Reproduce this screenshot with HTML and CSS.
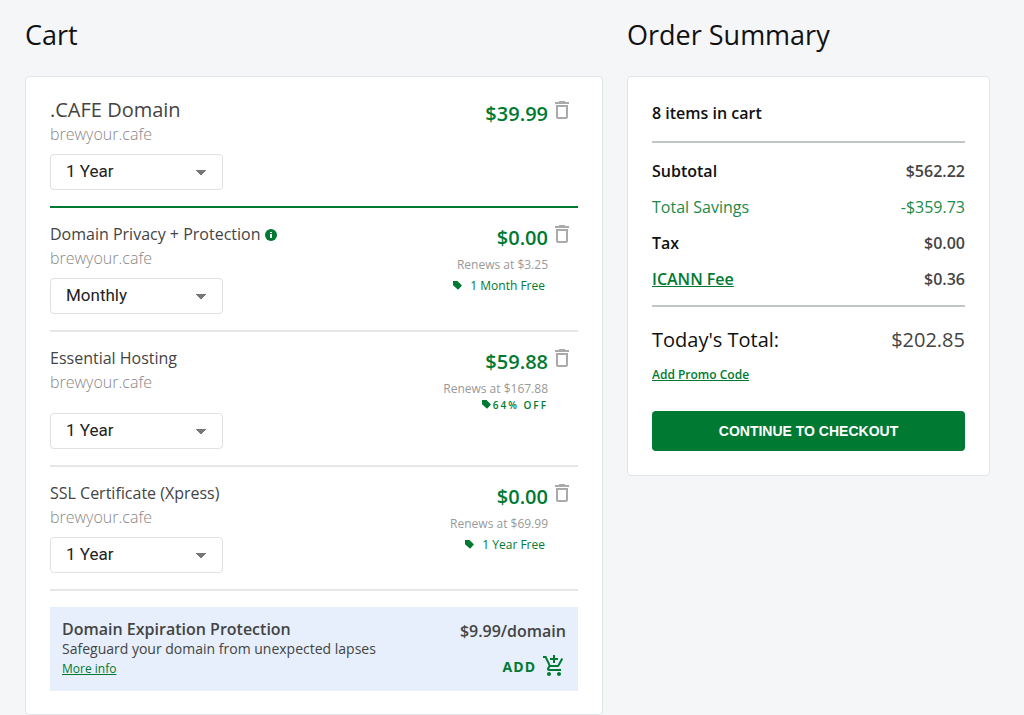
FILE: index.html
```html
<!DOCTYPE html>
<html lang="en">
<head>
    <meta charset="UTF-8">
    <meta name="viewport" content="width=device-width, initial-scale=1.0">
    <title>Cart</title>
    <link rel="stylesheet" href="styles.css">
</head>
<body>
    <!-- shared icons -->
    <svg class="sprite" aria-hidden="true">
        <symbol id="trash" viewBox="0 0 24 24"><path d="M6 19c0 1.1.9 2 2 2h8c1.1 0 2-.9 2-2V7H6v12zM8 9h8v10H8V9zm7.5-5l-1-1h-5l-1 1H5v2h14V4z"/></symbol>
        <symbol id="tag" viewBox="0 0 10 10"><path d="M1 1h4.500l4 4a.8.8 0 0 1 0 1.100L6.600 9.300a.8.8 0 0 1-1.100 0L1 5.200z"/></symbol>
        <symbol id="cart-add" viewBox="0 0 24 24"><path d="M11 9h2V6h3V4h-3V1h-2v3H8v2h3v3zm-4 9c-1.100 0-1.990.9-1.990 2S5.900 22 7 22s2-.9 2-2-.9-2-2-2zm10 0c-1.100 0-1.990.9-1.990 2s.89 2 1.990 2 2-.9 2-2-.9-2-2-2zm-9.830-3.250l.03-.12.9-1.630h7.450c.75 0 1.410-.41 1.750-1.030l3.860-7.010L19.420 4h-.01l-1.100 2-2.760 5H8.530l-.13-.27L6.160 6l-.95-2-.94-2H1v2h2l3.600 7.590-1.350 2.450c-.16.28-.25.61-.25.96 0 1.100.9 2 2 2h12v-2H7.420c-.13 0-.25-.11-.25-.25z"/></symbol>
    </svg>

    <div class="page">
        <main class="cart">
            <h1>Cart</h1>
            <div class="card cart-card">
                <section class="item item-main">
                    <div class="item-info">
                        <h2>.CAFE Domain</h2>
                        <p class="domain">brewyour.cafe</p>
                        <select class="term" aria-label="Domain term">
                            <option>1 Year</option>
                            <option>2 Years</option>
                        </select>
                    </div>
                    <div class="item-price">
                        <p class="price">$39.99</p>
                    </div>
                    <button class="remove" type="button" aria-label="Remove domain"><svg><use href="#trash"/></svg></button>
                </section>

                <section class="item">
                    <div class="item-info">
                        <h2>Domain Privacy + Protection <svg class="info" viewBox="0 0 12 12"><circle cx="6" cy="6" r="6"/><path d="M5 3h2v1H5zM5 5h2v4H5z"/></svg></h2>
                        <p class="domain">brewyour.cafe</p>
                        <select class="term" aria-label="Privacy term">
                            <option>Monthly</option>
                            <option>1 Year</option>
                        </select>
                    </div>
                    <div class="item-price">
                        <p class="price">$0.00</p>
                        <p class="renews">Renews at $3.25</p>
                        <p class="free"><svg class="tag"><use href="#tag"/></svg>1 Month Free</p>
                    </div>
                    <button class="remove" type="button" aria-label="Remove privacy"><svg><use href="#trash"/></svg></button>
                </section>

                <section class="item item-hosting">
                    <div class="item-info">
                        <h2>Essential Hosting</h2>
                        <p class="domain">brewyour.cafe</p>
                        <select class="term" aria-label="Hosting term">
                            <option>1 Year</option>
                            <option>2 Years</option>
                        </select>
                    </div>
                    <div class="item-price">
                        <p class="price">$59.88</p>
                        <p class="renews">Renews at $167.88</p>
                        <p class="discount"><svg class="tag"><use href="#tag"/></svg>64% OFF</p>
                    </div>
                    <button class="remove" type="button" aria-label="Remove hosting"><svg><use href="#trash"/></svg></button>
                </section>

                <section class="item">
                    <div class="item-info">
                        <h2>SSL Certificate (Xpress)</h2>
                        <p class="domain">brewyour.cafe</p>
                        <select class="term" aria-label="SSL term">
                            <option>1 Year</option>
                            <option>2 Years</option>
                        </select>
                    </div>
                    <div class="item-price">
                        <p class="price">$0.00</p>
                        <p class="renews">Renews at $69.99</p>
                        <p class="free"><svg class="tag"><use href="#tag"/></svg>1 Year Free</p>
                    </div>
                    <button class="remove" type="button" aria-label="Remove SSL"><svg><use href="#trash"/></svg></button>
                </section>

                <section class="upsell">
                    <div>
                        <h3>Domain Expiration Protection</h3>
                        <p>Safeguard your domain from unexpected lapses</p>
                        <a href="#">More info</a>
                    </div>
                    <div class="upsell-buy">
                        <p class="upsell-price">$9.99/domain</p>
                        <button class="add" type="button">ADD <svg><use href="#cart-add"/></svg></button>
                    </div>
                </section>
            </div>
        </main>

        <aside class="summary">
            <h1>Order Summary</h1>
            <div class="card summary-card">
                <p class="count">8 items in cart</p>
                <dl class="rows">
                    <div><dt>Subtotal</dt><dd>$562.22</dd></div>
                    <div class="savings"><dt>Total Savings</dt><dd>-$359.73</dd></div>
                    <div><dt>Tax</dt><dd>$0.00</dd></div>
                    <div><dt><a href="#">ICANN Fee</a></dt><dd>$0.36</dd></div>
                </dl>
                <div class="total"><span>Today's Total:</span><span class="amount">$202.85</span></div>
                <a class="promo" href="#">Add Promo Code</a>
                <button class="checkout" type="button">CONTINUE TO CHECKOUT</button>
            </div>
        </aside>
    </div>
</body>
</html>
```

FILE: styles.css
```css
* { box-sizing: border-box; }
body { margin: 0; background: #f4f6f8; color: #444; font-family: 'Open Sans', sans-serif; font-size: 16px; line-height: 24px; }
h1, h2, h3, p, dl, dd { margin: 0; }
a { color: #007a33; }
button { font-family: inherit; border: 0; cursor: pointer; }
.sprite { position: absolute; width: 0; height: 0; }

.page { display: grid; grid-template-columns: minmax(0, 1fr) 363px; gap: 24px; align-items: start; padding: 15px 34px 0 25px; }
h1 { margin-bottom: 21px; color: #111; font-size: 27px; font-weight: 400; line-height: 40px; }
.card { background: #fff; border: 1px solid #e2e5e6; border-radius: 4px; }

/* cart items */
.cart-card { padding: 7px 24px 23px; }
.item { display: flex; padding: 14px 0 16px; border-bottom: 2px solid #e6e7e8; }
.item-main { border-bottom-color: #007a33; }
.item-info { flex: 1; }
.item h2 { font-size: 16px; font-weight: 400; }
.item-main h2 { font-size: 20px; }
.domain { color: #888; font-weight: 300; }
.term { display: block; width: 173px; height: 36px; margin-top: 8px; padding: 0 15px 2px; appearance: none; border: 1px solid #dfe1e2; border-radius: 4px; color: #222; background: #fff; font-family: Roboto, sans-serif; font-size: 17px; background-image: linear-gradient(to bottom right, #777 50%, transparent 51%), linear-gradient(to bottom left, #777 50%, transparent 51%); background-repeat: no-repeat; background-size: 5px 5px; background-position: 150px 15px, 145px 15px; }
.item-hosting .term { margin-top: 19px; }
.item-price { padding-top: 4px; text-align: right; }
.price { color: #007a33; font-size: 20px; font-weight: 600; }
.renews { color: #999; font-size: 12px; line-height: 29px; }
.free { padding-right: 3px; color: #007a33; font-size: 12px; line-height: 14px; }
.discount { margin-top: -4px; color: #007a33; font-size: 10px; font-weight: 600; line-height: 10px; letter-spacing: 2px; }
.tag { width: 10px; height: 10px; fill: #007a33; }
.free .tag { margin-right: 8px; }
.discount .tag { margin-right: 2px; }
.info { width: 12px; height: 12px; vertical-align: -1px; fill: #007a33; }
.info path { fill: #fff; }
.remove { width: 24px; height: 24px; margin: 0 4px 0 2px; padding: 0; background: none; }
.remove svg { display: block; width: 24px; height: 24px; fill: #aaa; }

/* add-on offer */
.upsell { display: flex; justify-content: space-between; margin-top: 16px; padding: 12px; background: #e6effb; font-size: 14px; line-height: 20px; }
.upsell h3 { font-size: 16px; font-weight: 600; line-height: 20px; }
.upsell a { display: block; font-size: 12px; }
.upsell-buy { text-align: right; }
.upsell-price { font-size: 16px; font-weight: 600; line-height: 24px; }
.add { display: flex; align-items: center; gap: 6px; margin: 11px 0 0 auto; padding: 0; background: none; color: #007a33; font-size: 14px; font-weight: 700; letter-spacing: 1px; }
.add svg { width: 24px; height: 24px; fill: #007a33; }

/* order summary */
.summary-card { padding: 24px; }
.count { padding-bottom: 16px; border-bottom: 2px solid #bfc6c3; color: #111; font-weight: 600; }
.rows { padding: 16px 0 14px; border-bottom: 2px solid #bfc6c3; font-weight: 600; }
.rows div, .total { display: flex; justify-content: space-between; }
.rows div + div { margin-top: 12px; }
.rows dt { color: #111; }
.rows .savings, .rows .savings dt { color: #1c8a48; font-weight: 400; }
.total { margin-top: 21px; color: #111; font-size: 20px; }
.amount { color: #444; }
.promo { display: block; margin-top: 11px; font-size: 12px; font-weight: 600; }
.checkout { width: 100%; height: 40px; margin-top: 24px; border-radius: 4px; background: #007a33; color: #fff; font-family: 'Liberation Sans', Arial, sans-serif; font-size: 14px; font-weight: 700; }
```
